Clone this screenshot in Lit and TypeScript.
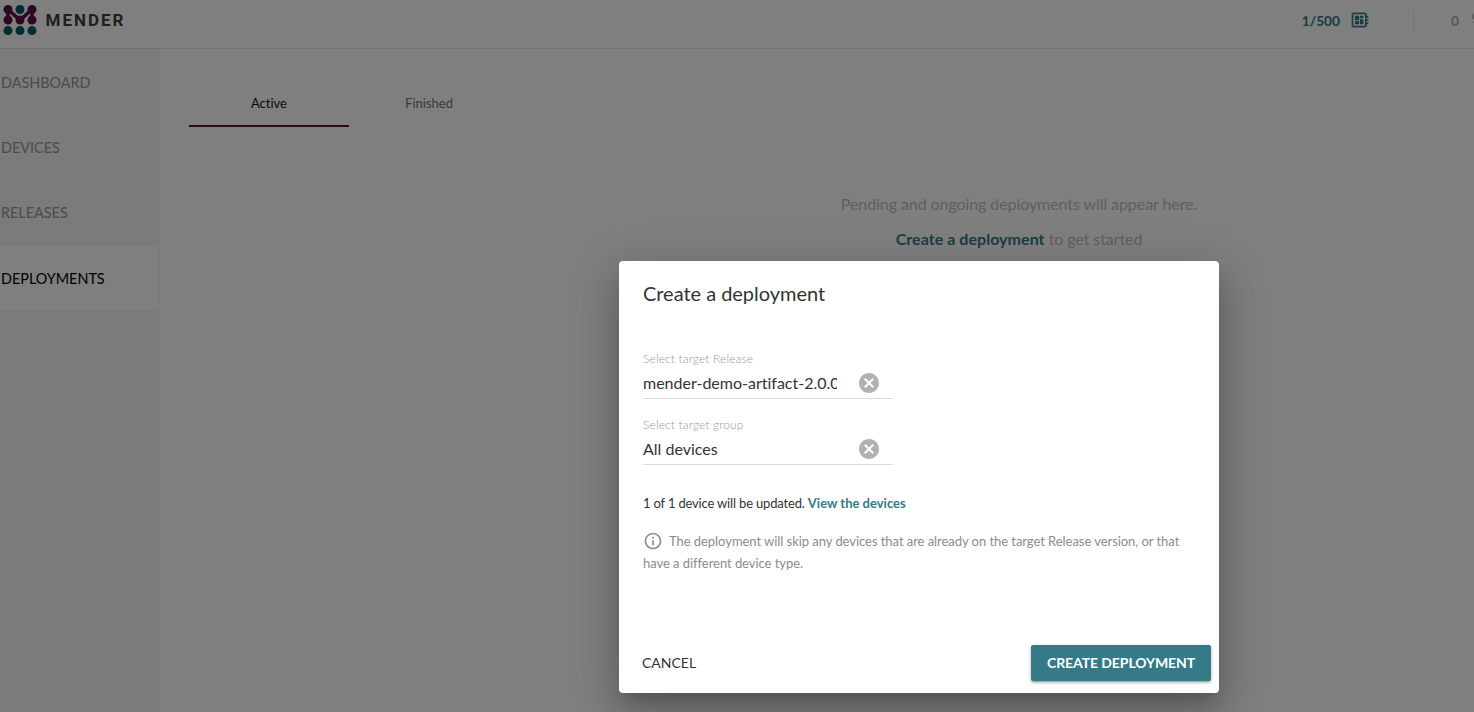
import { LitElement, html, css, svg } from "lit";
import { customElement, property } from "lit/decorators.js";

const DOTS: [number, number, string][] = [
  [8, 9.5, "#5d0f43"], [20, 9.5, "#015969"], [32, 9.5, "#5d0f43"],
  [8, 20, "#5d0f43"], [20, 20, "#5d0f43"], [32, 20, "#5d0f43"],
  [8, 30.6, "#015969"], [20, 30.6, "#015969"], [32, 30.6, "#015969"],
];

@customElement("top-bar")
export class TopBar extends LitElement {
  static styles = css`
    :host { display: flex; height: 48px; border-bottom: 1px solid #e0e0e0; overflow: hidden; }
    .logo { width: 40px; height: 40px; flex: none; }
    .name { width: 90px; padding-left: 4px; flex: none; }
    .name text { font: 700 17px Roboto, sans-serif; fill: #404041; }
    .status { margin-left: auto; display: flex; height: 41px; align-items: center; color: #347a87; font: 700 13.7px/20px Lato, sans-serif; }
    .board { width: 20px; height: 20px; margin-left: 10px; margin-top: -2px; fill: #347a87; }
    .rule { width: 1px; height: 24px; margin-left: 43px; background: #e9f0f1; }
    .jobs { color: #b0b0b0; font-weight: 700; margin-left: 37px; width: 8px; }
    .sync { width: 2px; height: 20px; margin-left: 13px; margin-top: -2px; fill: #bdbdbd; flex: none; }
  `;
  render() {
    return html`
      <svg class="logo" viewBox="0 0 40 40">
        <path d="M8 20V9.5L20 20L32 9.5V20" fill="none" stroke="#5d0f43" stroke-width="3.6" />
        ${DOTS.map(([x, y, c]) => svg`<circle cx=${x} cy=${y} r="4.5" fill=${c} />`)}
      </svg>
      <svg class="name" viewBox="0 0 90 40" width="90" height="40">
        <text x="1.500" y="26" textLength="78" lengthAdjust="spacing">MENDER</text>
      </svg>
      <div class="status">
        <span>1/500</span>
        <svg class="board" viewBox="0 0 24 24"><path d="M22 9V7h-2V5c0-1.1-.9-2-2-2H4c-1.1 0-2 .9-2 2v14c0 1.1.9 2 2 2h14c1.1 0 2-.9 2-2v-2h2v-2h-2v-2h2v-2h-2V9h2zm-4 10H4V5h14v14zM6 13h5v4H6zm6-6h4v3h-4zM6 7h5v5H6zm6 4h4v6h-4z" /></svg>
        <i class="rule"></i>
        <span class="jobs">0</span>
        <svg class="sync" viewBox="0 0 2 20"><path d="M0 3L2 5.500V9H0zM1 11h1v2H1z" /></svg>
      </div>`;
  }
}

@customElement("side-nav")
export class SideNav extends LitElement {
  static styles = css`
    :host { display: block; width: 158px; border-right: 1px solid #edf1f2; background: #f7f7f7; flex: none; }
    .item { box-sizing: border-box; height: 65px; display: flex; align-items: center; padding: 2px 0 0 1px; font: 14.4px/20px Lato, sans-serif; color: #969696; }
    .item.on { height: 67px; background: #fff; border-top: 1px solid #eef2f2; border-bottom: 1px solid #eef2f2; color: #000; }
  `;
  render() {
    return html`${["DASHBOARD", "DEVICES", "RELEASES", "DEPLOYMENTS"].map(
      (t) => html`<div class="item ${t === "DEPLOYMENTS" ? "on" : ""}">${t}</div>`
    )}`;
  }
}

@customElement("select-field")
export class SelectField extends LitElement {
  @property() label = "";
  @property() value = "";
  static styles = css`
    :host { display: block; width: 250px; height: 50px; border-bottom: 1px solid #dcdcdc; margin-bottom: 15px; font-family: Lato, sans-serif; font-variant-ligatures: none; }
    .label { font-size: 12px; line-height: 16px; padding-top: 3px; font-weight: 300; letter-spacing: .13px; color: #999; }
    .row { display: flex; height: 31px; align-items: center; }
    .value { width: 194px; overflow: hidden; white-space: nowrap; font-size: 16px; line-height: 22px; color: #333; }
    .clear { width: 24px; height: 24px; margin-left: 20px; fill: #b1b1b1; }
  `;
  render() {
    return html`<div class="label">${this.label}</div>
      <div class="row">
        <span class="value">${this.value}</span>
        <svg class="clear" viewBox="0 0 24 24"><path d="M12 2C6.470 2 2 6.470 2 12s4.470 10 10 10 10-4.470 10-10S17.530 2 12 2zm5 13.590L15.590 17 12 13.410 8.410 17 7 15.590 10.590 12 7 8.410 8.410 7 12 10.590 15.590 7 17 8.410 13.410 12 17 15.590z" /></svg>
      </div>`;
  }
}

@customElement("deployment-dialog")
export class DeploymentDialog extends LitElement {
  static styles = css`
    :host { box-sizing: border-box; display: flex; flex-direction: column; width: 600px; height: 432px; background: #fff; border-radius: 4px; font-family: Lato, sans-serif; font-variant-ligatures: none;
      box-shadow: 0 11px 15px -7px rgba(0,0,0,.2), 0 24px 38px 3px rgba(0,0,0,.14), 0 9px 46px 8px rgba(0,0,0,.12); }
    .title { margin: 0; padding: 16px 24px 0; font-size: 20px; font-weight: 400; line-height: 32px; letter-spacing: -.03px; color: #333; }
    .body { padding: 39px 24px 0; font-size: 13px; line-height: 22px; color: #333; flex: 1; }
    .count { margin: 27px 0 0; letter-spacing: -.17px; }
    .link { color: #347a87; font-weight: 700; letter-spacing: 0; }
    .note { margin: 16px 0 0; color: #8c8c8c; letter-spacing: -.05px; }
    .info { width: 20px; height: 20px; vertical-align: middle; margin: -6px 6px -2px 0; fill: #8c8c8c; }
    .actions { display: flex; justify-content: space-between; align-items: center; padding: 0 8px 12px 23px; }
    .btn { font: 400 14px/36px Lato, sans-serif; border: 0; background: none; padding: 0; color: #333; }
    .primary { width: 180px; height: 36px; font-weight: 700; letter-spacing: -.08px; color: #fff; background: #347a87; border-radius: 2px;
      box-shadow: 0 1px 5px rgba(0,0,0,.2), 0 2px 2px rgba(0,0,0,.14), 0 3px 1px -2px rgba(0,0,0,.12); }
  `;
  render() {
    return html`
      <h2 class="title">Create a deployment</h2>
      <div class="body">
        <select-field label="Select target Release" value="mender-demo-artifact-2.0.0"></select-field>
        <select-field label="Select target group" value="All devices"></select-field>
        <p class="count">1 of 1 device will be updated. <span class="link">View the devices</span></p>
        <p class="note"><svg class="info" viewBox="0 0 24 24"><path d="M11 17h2v-6h-2v6zm1-15C6.480 2 2 6.480 2 12s4.480 10 10 10 10-4.480 10-10S17.520 2 12 2zm0 18c-4.410 0-8-3.590-8-8s3.590-8 8-8 8 3.590 8 8-3.590 8-8 8zM11 9h2V7h-2v2z" /></svg>The deployment will skip any devices that are already on the target Release version, or that have a different device type.</p>
      </div>
      <div class="actions">
        <button class="btn">CANCEL</button>
        <button class="btn primary">CREATE DEPLOYMENT</button>
      </div>`;
  }
}

@customElement("app-root")
export class AppRoot extends LitElement {
  static styles = css`
    :host { display: grid; width: 1474px; height: 712px; overflow: hidden; background: #fff; font-family: Lato, sans-serif; font-variant-ligatures: none; }
    .page, .backdrop { grid-area: 1 / 1; min-width: 0; min-height: 0; }
    .page { display: flex; flex-direction: column; }
    .main { display: flex; flex: 1; min-height: 0; }
    .content { flex: 1; padding-left: 30px; }
    .tabs { display: flex; padding-top: 30px; font-size: 13px; }
    .tab { width: 160px; height: 46px; line-height: 48px; border-bottom: 2px solid transparent; text-align: center; color: #757575; }
    .tab.on { color: #111; border-color: #5d0f43; }
    .empty { width: 400px; margin-left: 630px; margin-top: 59px; text-align: center; font-size: 16px; line-height: 35px; letter-spacing: -.08px; color: #c0c0c0; }
    .empty p { margin: 0; }
    .link { color: #347a87; font-weight: 700; letter-spacing: .05px; }
    .backdrop { z-index: 1; background: rgba(0,0,0,.5); padding: 261px 0 0 619px; }
  `;
  render() {
    return html`
      <div class="page">
        <top-bar></top-bar>
        <div class="main">
          <side-nav></side-nav>
          <div class="content">
            <div class="tabs"><div class="tab on">Active</div><div class="tab">Finished</div></div>
            <div class="empty">
              <p>Pending and ongoing deployments will appear here.</p>
              <p><span class="link">Create a deployment</span> to get started</p>
            </div>
          </div>
        </div>
      </div>
      <div class="backdrop"><deployment-dialog></deployment-dialog></div>`;
  }
}
